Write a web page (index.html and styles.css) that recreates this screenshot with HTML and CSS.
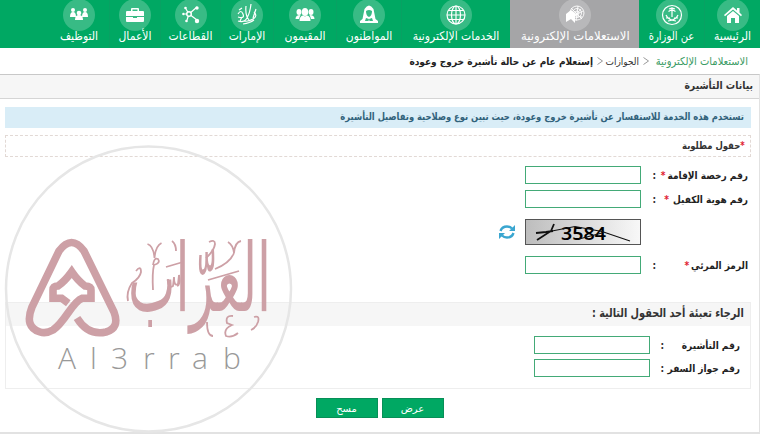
FILE: index.html
```html
<!DOCTYPE html>
<html lang="ar" dir="rtl">
<head>
    <meta charset="UTF-8">
    <meta name="viewport" content="width=device-width, initial-scale=1.0">
    <title>الاستعلامات الإلكترونية</title>
    <link rel="stylesheet" href="styles.css">
</head>
<body>
    <div class="page">
        <nav class="main-nav">
            <a class="nav-item home">
                <svg class="nav-icon" viewBox="0 0 32 32"><circle cx="16" cy="16" r="16"/><path class="solid" d="M16 8l4 3.500V9h2.500v4.500L25 16l-1 1.200-8-6.700-8 6.700L7 16zM10 17l6-5 6 5v7h-4v-5h-4v5h-4z"/></svg>
                <span>الرئيسية</span>
            </a>
            <a class="nav-item ministry">
                <svg class="nav-icon" viewBox="0 0 32 32"><circle cx="16" cy="16" r="16"/><g class="line"><circle cx="16" cy="16" r="9.500"/><path d="M16 9v9M13 10l3-1 3 1M12.500 12.500l3.500-2 3.500 2M10 16q2 5 10 6M22 16q-2 5-10 6M10 19h4M18 19h4"/></g></svg>
                <span>عن الوزارة</span>
            </a>
            <a class="nav-item inquiries active">
                <svg class="nav-icon" viewBox="0 0 32 32"><circle cx="16" cy="16" r="16"/><path class="solid" d="M7 15l5-4 4 3v10l-4-4-5 3z"/><g class="line thin"><circle cx="18" cy="14" r="7"/><circle cx="18" cy="14" r="4.500"/><circle cx="18" cy="14" r="2"/><path d="M12 9l11 11M19 7l-2 15M24 12l-8 4M13 16l10 2M14 19l8-9"/></g></svg>
                <span>الاستعلامات الإلكترونية</span>
            </a>
            <a class="nav-item services">
                <svg class="nav-icon" viewBox="0 0 32 32"><circle cx="16" cy="16" r="16"/><g class="line"><circle cx="16" cy="16" r="9"/><ellipse cx="16" cy="16" rx="4.500" ry="9"/><path d="M16 7v18M7 16h18M8.500 11.500h15M8.500 20.500h15"/></g></svg>
                <span>الخدمات الإلكترونية</span>
            </a>
            <a class="nav-item citizens">
                <svg class="nav-icon" viewBox="0 0 32 32"><circle cx="16" cy="16" r="16"/><path class="solid" fill-rule="evenodd" d="M11.500 10q4.500-7 9 0l2 10 2.500 2v2H7v-2l2.500-2zM13 12q0 5 3 6 3-1 3-6-3-2-6 0zM13 19l-1 3h3.500l.5-2 .5 2H20l-1-3-3 1z"/></svg>
                <span>المواطنون</span>
            </a>
            <a class="nav-item residents">
                <svg class="nav-icon" viewBox="0 0 32 32"><circle cx="16" cy="16" r="16"/><g class="solid"><ellipse cx="16" cy="13" rx="3.200" ry="4"/><ellipse cx="10" cy="13" rx="2.500" ry="3"/><ellipse cx="22" cy="13" rx="2.500" ry="3"/><path d="M6.500 20q0-4 5-4-1 2-1.500 4zM25.500 20q0-4-5-4 1 2 1.500 4zM10.500 22q0-5 3.500-5.500l2 1 2-1q3.500.5 3.500 5.500z"/></g></svg>
                <span>المقيمون</span>
            </a>
            <a class="nav-item emirates">
                <svg class="nav-icon" viewBox="0 0 32 32"><circle cx="16" cy="16" r="16"/><path class="line" d="M15 7q-1 9 3 14M20 5q-1 9-4 14t-9 3M7 15q3-5 5 0t-5 3M8 11l3-2M23 13q4 4-1 7t-9 2M25 10l-3 9M12 25q7-1 11-4M9 22l2-4"/></svg>
                <span>الإمارات</span>
            </a>
            <a class="nav-item sectors">
                <svg class="nav-icon" viewBox="0 0 32 32"><circle cx="16" cy="16" r="16"/><path class="line" d="M14 15l8-7M14 15l8 6M14 15h-4M14 15l-3-5M14 15l-2 6"/><g class="solid"><circle cx="14" cy="15" r="3"/><circle cx="22" cy="9" r="1.700"/><circle cx="22" cy="22" r="2.200"/><circle cx="8.500" cy="15" r="1.300"/><circle cx="10.500" cy="9" r="1.300"/><circle cx="11.500" cy="22" r="1.300"/></g><circle class="hole" cx="14" cy="15" r="1.500"/></svg>
                <span>القطاعات</span>
            </a>
            <a class="nav-item business">
                <svg class="nav-icon" viewBox="0 0 32 32"><circle cx="16" cy="16" r="16"/><path class="solid" fill-rule="evenodd" d="M12 12v-2q0-1 1-1h6q1 0 1 1v2h4q1 0 1 1v4H7v-4q0-1 1-1zm1.500 0h5v-1.500h-5zM7 18h7v1h4v-1h7v4q0 1-1 1H8q-1 0-1-1z"/></svg>
                <span>الأعمال</span>
            </a>
            <a class="nav-item jobs">
                <svg class="nav-icon" viewBox="0 0 32 32"><circle cx="16" cy="16" r="16"/><g class="solid"><circle cx="10" cy="11" r="2"/><circle cx="22" cy="11" r="2"/><circle cx="16" cy="14" r="2.300"/><path d="M7 18q0-5 3-5t3 5zM19 18q0-5 3-5t3 5zM12 21q0-5 4-5t4 5z"/></g></svg>
                <span>التوظيف</span>
            </a>
        </nav>

        <div class="breadcrumb">
            <a class="crumb-root">الاستعلامات الإلكترونية</a>
            <svg class="chevron" viewBox="0 0 6 8"><path d="M5.500 0.500l-5 3.500 5 3.500" transform="matrix(-1 0 0 1 6 0)"/></svg>
            <a class="crumb-mid">الجوازات</a>
            <svg class="chevron" viewBox="0 0 6 8"><path d="M5.500 0.500l-5 3.500 5 3.500" transform="matrix(-1 0 0 1 6 0)"/></svg>
            <b class="crumb-last">إستعلام عام عن حالة تأشيرة خروج وعودة</b>
        </div>

        <main class="panel">
            <h1 class="panel-title"><span>بيانات التأشيرة</span></h1>
            <div class="alert"><span>تستخدم هذه الخدمة للاستفسار عن تأشيرة خروج وعودة، حيث تبين نوع وصلاحية وتفاصيل التأشيرة</span></div>
            <div class="required"><span><i>*</i>حقول مطلوبة</span></div>

            <form class="form">
                <div class="row">
                    <label class="label">رقم رخصة الإقامة<i>*</i></label>
                    <span class="colon">:</span>
                    <input class="field" type="text">
                </div>
                <div class="row">
                    <label class="label">رقم هوية الكفيل<i class="far">*</i></label>
                    <span class="colon">:</span>
                    <input class="field" type="text">
                </div>
                <div class="row captcha-row">
                    <svg class="captcha" viewBox="0 0 116 26" direction="ltr">
                        <defs><linearGradient id="shade"><stop offset="0" stop-color="#bdbdbd"/><stop offset="1" stop-color="#f8f8f8"/></linearGradient></defs>
                        <rect x="0.500" y="0.500" width="115" height="25" fill="url(#shade)" stroke="#555"/>
                        <text x="36" y="21" textLength="45" lengthAdjust="spacingAndGlyphs">3584</text>
                        <path d="M27 12L50 7.500l27 5 28 9.500M54 20l23-6"/>
                        <path class="thick" d="M11 14l10-1 7-1M12 21l14-9 3-7"/>
                    </svg>
                    <svg class="refresh" viewBox="0 0 16 14"><path d="M1.500 6Q3 1.500 8 1.500q3 0 5 2M14.500 8Q13 12.500 8 12.500q-3 0-5-2" fill="none" stroke="#3aa6d0" stroke-width="2.400"/><path d="M16 0v6h-6zM0 14V8h6z" fill="#3aa6d0"/></svg>
                </div>
                <div class="row">
                    <label class="label">الرمز المرئي<i>*</i></label>
                    <span class="colon">:</span>
                    <input class="field" type="text">
                </div>

                <section class="group">
                    <h2 class="group-title"><span>الرجاء تعبئة أحد الحقول التالية :</span></h2>
                    <div class="row">
                        <label class="label">رقم التأشيرة</label>
                        <span class="colon">:</span>
                        <input class="field" type="text">
                    </div>
                    <div class="row">
                        <label class="label">رقم جواز السفر</label>
                        <span class="colon">:</span>
                        <input class="field" type="text">
                    </div>
                </section>

                <div class="actions">
                    <button type="button" class="btn">عرض</button>
                    <button type="button" class="btn">مسح</button>
                </div>
            </form>
        </main>

        <svg class="watermark" viewBox="0 0 290 290" direction="ltr">
            <circle class="ring" cx="144.500" cy="145" r="142.500"/>
            <path class="emblem" d="M64.300 159.300L57.700 154.300H49V146Q49 142 54 142 61 137 67.700 127.700 74 137 81 142 87 142 87 146V154.300H78Q73 156 64 169 55 182 49 186 42 190 36 188 20 183 28 163L55 107Q67.700 90 80 107L110 168Q116 184 102 188 84 192 73 174"/>
            <text class="script" transform="translate(124 167) scale(1 1.900)" x="0" y="0" textLength="143" lengthAdjust="spacingAndGlyphs" direction="rtl" text-anchor="end">العرّاب</text>
            <g class="flourish">
                <path d="M143.500 100q6 2 7 14 1-12 7-15M168 97q4 3 4 10M205 98q6-3 6 2-1 7-9 14M224 98q5 3 6 11 1-11 7-12M230 109q-4 10-19 16"/>
                <path d="M204 136l31-9M162 123l17-5M149 121q1-8 5-6 3 4-4 6-2 8-1 25M132 127q5-6 5 1-1 6-9 11-6 9-4 18M164 135q0 10 5 7l1-9q0 10 4 7l1-9q2 10-2 11"/>
                <path d="M203 178q0 14 6 14M229 172q-8-1-6 7l5 2q-9 4-6 11 6 2 12-3M250 173q6-2 4 5-2 6-7 8"/>
            </g>
            <text class="latin" y="225"><tspan x="54">A</tspan><tspan x="86">l</tspan><tspan x="107">3</tspan><tspan x="139">r</tspan><tspan x="164">r</tspan><tspan x="188">a</tspan><tspan x="219">b</tspan></text>
        </svg>
    </div>
</body>
</html>
```
FILE: styles.css
```css
* {
    box-sizing: border-box;
}
body {
    margin: 0;
    background: #fff;
    font-family: "DejaVu Sans Condensed", "DejaVu Sans", sans-serif;
    font-stretch: condensed;
    font-size: 10px;
    color: #333;
    overflow: hidden;
}
i {
    font-style: normal;
    color: #e02030;
}
.page {
    position: relative;
    width: 760px;
    height: 437px;
    margin-left: 0;
    margin-right: auto;
    direction: rtl;
}
html {
    direction: ltr;
}
.main-nav {
    display: flex;
    height: 48px;
    background: #00a863;
}
.nav-item {
    display: flex;
    flex-direction: column;
    align-items: center;
    flex: none;
    color: #fff;
    font-size: 12px;
    line-height: 14px;
    white-space: nowrap;
    border-left: 1px solid #08a163;
}
.nav-item span {
    margin-top: -2px;
}
.home { width: 56px; }
.ministry { width: 65px; }
.inquiries { width: 129px; }
.services { width: 109px; }
.citizens { width: 65px; }
.residents { width: 63px; }
.emirates { width: 53px; }
.sectors { width: 60px; }
.business { width: 51px; }
.jobs { width: 60px; border-left: 0; }
.ministry span {
    transform: scaleX(0.93);
}
.inquiries span {
    transform: scaleX(1.08);
}
.active {
    background: #a5a5a7;
    border-color: #a5a5a7;
}
.nav-icon {
    width: 32px;
    height: 32px;
    flex: none;
    margin-top: -1px;
}
.nav-icon > circle {
    fill: rgba(255, 255, 255, 0.22);
}
.nav-icon .solid {
    fill: #fff;
}
.nav-icon .line {
    fill: none;
    stroke: #fff;
    stroke-width: 1.2;
}
.nav-icon .thin {
    stroke-width: 0.9;
}
.nav-icon > .hole {
    fill: #36b981;
}
.breadcrumb {
    display: flex;
    align-items: center;
    height: 26px;
    padding-right: 12px;
    white-space: nowrap;
}
.crumb-root {
    color: #399b63;
    font-size: 11px;
    width: 95px;
}
.crumb-mid {
    width: 32px;
}
.crumb-last {
    color: #222;
}
.chevron {
    width: 6px;
    height: 8px;
    margin: 0 4px;
    fill: none;
    stroke: #999;
}
.panel {
    height: 360px;
    border-top: 1px solid #c8c8c8;
    border-right: 1px solid #e2e2e2;
    border-bottom: 2px solid #e2e2e2;
}
.panel-title span,
.alert span,
.required span,
.group-title span {
    display: inline-block;
    transform-origin: right center;
}
.panel-title {
    margin: 0;
    height: 24px;
    line-height: 22px;
    padding-right: 6px;
    background: #f6f6f6;
    border-bottom: 1px solid #d5d5d5;
    font-size: 11px;
}
.panel-title span {
    transform: scaleX(0.94);
}
.alert {
    height: 21px;
    line-height: 20px;
    margin: 8px 8px 0 5px;
    padding-right: 7px;
    background: #d9edf7;
    color: #31627b;
    font-weight: bold;
    white-space: nowrap;
}
.alert span {
    transform: scaleX(0.93);
}
.required {
    height: 22px;
    line-height: 20px;
    margin: 7px 8px 0 5px;
    padding-right: 5px;
    border: 1px dashed #e2d9d5;
    font-weight: bold;
}
.required span {
    transform: scaleX(0.94);
}
.form {
    padding-top: 9px;
}
.row {
    display: flex;
    align-items: center;
    height: 18px;
    margin-bottom: 6px;
    padding-right: 11px;
}
.label {
    display: flex;
    width: 92px;
    font-weight: bold;
    white-space: nowrap;
    color: #222;
}
.label i {
    margin-right: 2px;
}
.label .far {
    margin-right: 4px;
}
.colon {
    width: 15px;
    font-weight: bold;
}
.field {
    width: 116px;
    height: 18px;
    border: 1px solid #43aa77;
    background: #fff;
    padding: 0 4px;
}
.captcha-row {
    height: 26px;
    margin: 11px 0;
    padding-right: 118px;
}
.captcha {
    width: 116px;
    height: 26px;
}
.captcha text {
    font: 600 18px "Noto Sans", sans-serif;
    direction: ltr;
}
.captcha path {
    fill: none;
    stroke: #111;
    stroke-width: 1.1;
}
.captcha .thick {
    stroke-width: 1.8;
}
.refresh {
    width: 16px;
    height: 14px;
    margin-right: 10px;
}
.group {
    height: 87px;
    margin: 28px 8px 0 5px;
    border: 1px solid #eee;
}
.group-title {
    height: 23px;
    margin: 0 0 10px;
    padding-right: 6px;
    background: #f6f6f6;
    font-size: 12px;
    line-height: 21px;
}
.group-title span {
    transform: scaleX(0.9);
}
.group .row {
    margin-bottom: 5px;
    padding-right: 10px;
}
.group .label {
    width: 76px;
}
.group .colon {
    width: 14px;
}
.actions {
    display: flex;
    justify-content: center;
    gap: 4px;
    margin-top: 9px;
}
.btn {
    width: 62px;
    height: 20px;
    padding: 0;
    border: 1px solid #078f57;
    background: #00a863;
    color: #fff;
    font: 10px "DejaVu Sans", sans-serif;
}
/* stamp laid over the page */
.watermark {
    position: absolute;
    left: 4px;
    top: 144px;
    width: 290px;
    height: 290px;
}
.ring {
    fill: none;
    stroke: #e6e6e6;
    stroke-width: 2.5;
}
.emblem {
    fill: none;
    stroke: #cda0a6;
    stroke-width: 7.6;
}
.script {
    font: 50px "DejaVu Sans", sans-serif;
    fill: #cda0a6;
}
.flourish {
    fill: none;
    stroke: #cda0a6;
    stroke-width: 1.8;
}
.latin {
    font: 300 30px "Open Sans", sans-serif;
    fill: #999;
}
```
